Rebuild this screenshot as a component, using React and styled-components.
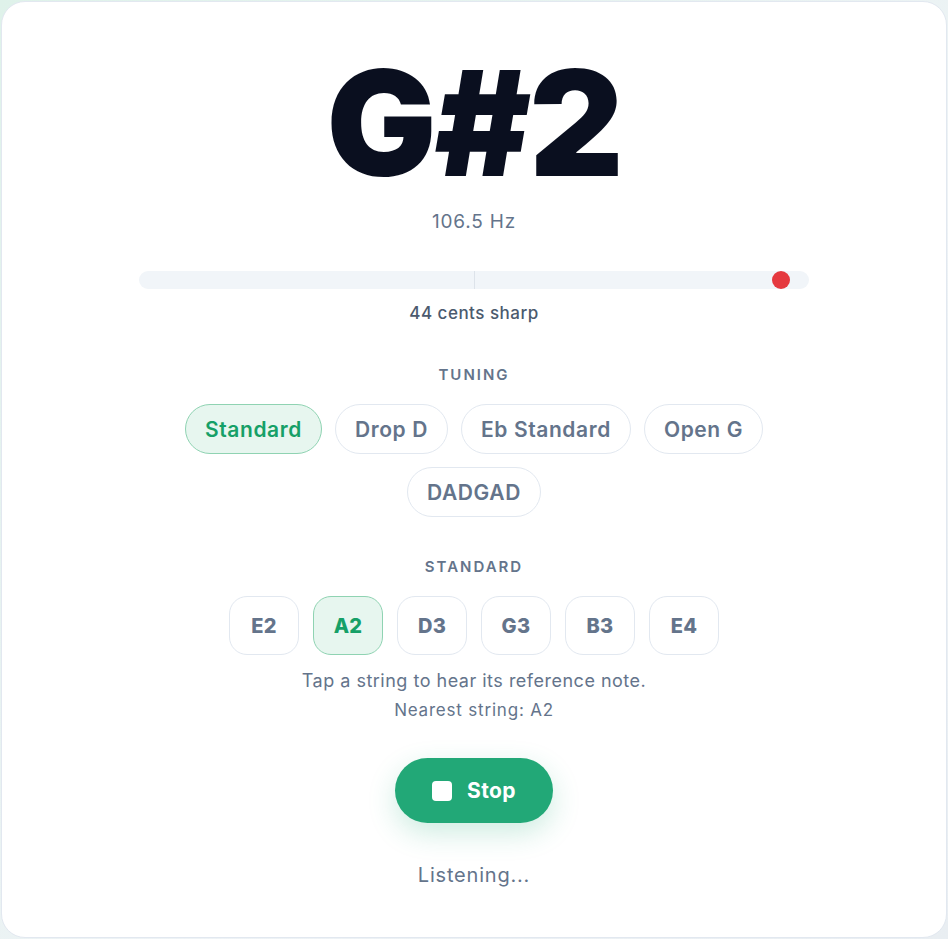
import React from 'react';
import styled, { createGlobalStyle } from 'styled-components';

const GlobalStyle = createGlobalStyle`
  * { box-sizing: border-box; }
  html, body { margin: 0; padding: 0; }
  body {
    font-family: Inter, 'Noto Sans', sans-serif;
    background: linear-gradient(135deg, #dff2ea 0%, #eef3f6 60%, #e9eef2 100%);
    min-height: 939px;
  }
  #root { padding: 1px; }
`;

const tunings = ['Standard', 'Drop D', 'Eb Standard', 'Open G', 'DADGAD'];
const strings = ['E2', 'A2', 'D3', 'G3', 'B3', 'E4'];

const App = () => {
  const cents = 44;
  // meter spans ±48 cents across the track
  const dotLeft = Math.min(98, 50 + (cents / 48) * 50);
  return (
    <>
      <GlobalStyle />
      <Card>
        <Note>G#2</Note>
        <Freq>106.5 Hz</Freq>
        <Meter>
          <CenterLine />
          <Dot style={{ left: `${dotLeft}%` }} />
        </Meter>
        <Cents>44 cents sharp</Cents>

        <Label>Tuning</Label>
        <ChipRow>
          {tunings.map((t, i) => (
            <Chip key={t} $active={i === 0}>
              {t}
            </Chip>
          ))}
        </ChipRow>

        <Label $top={40}>Standard</Label>
        <StringRow>
          {strings.map((s) => (
            <StringBtn key={s} $active={s === 'A2'}>
              {s}
            </StringBtn>
          ))}
        </StringRow>
        <Hint>Tap a string to hear its reference note.</Hint>
        <Nearest>Nearest string: A2</Nearest>

        <StopButton type='button'>
          <StopIcon />
          Stop
        </StopButton>
        <Status>Listening...</Status>
      </Card>
    </>
  );
};

const Card = styled.main`
  height: 937px;
  background: #fff;
  border: 1px solid #e2e8f0;
  border-radius: 24px;
  display: flex;
  flex-direction: column;
  align-items: center;
  padding: 46px 137px 0;
`;

const Note = styled.h1`
  margin: 0;
  font-size: 146px;
  font-weight: 900;
  line-height: 150px;
  letter-spacing: -2px;
  color: #0a0f1f;
`;

const Freq = styled.div`
  margin-top: 12px;
  font-size: 19px;
  letter-spacing: 0.8px;
  color: #64748b;
`;

const Meter = styled.div`
  position: relative;
  width: 100%;
  height: 18px;
  margin-top: 38px;
  background: #f1f5f9;
  border-radius: 999px;
`;

const CenterLine = styled.span`
  position: absolute;
  left: 50%;
  top: 0;
  bottom: 0;
  width: 1px;
  background: #dde3ea;
`;

const Dot = styled.span`
  position: absolute;
  top: 50%;
  width: 18px;
  height: 18px;
  border-radius: 50%;
  background: #e5393f;
  transform: translate(-50%, -50%);
`;

const Cents = styled.div`
  margin-top: 14px;
  font-size: 17px;
  font-weight: 500;
  letter-spacing: 0.5px;
  color: #4b5a6e;
`;

const Label = styled.div`
  margin-top: ${(p) => p.$top || 42}px;
  font-size: 15px;
  font-weight: 600;
  letter-spacing: 2px;
  text-transform: uppercase;
  color: #64748b;
`;

const ChipRow = styled.div`
  display: flex;
  flex-wrap: wrap;
  justify-content: center;
  gap: 13px;
  margin-top: 20px;
`;

const Chip = styled.button`
  height: 50px;
  padding: 0 19px;
  border-radius: 999px;
  font-family: inherit;
  font-size: 21px;
  font-weight: 600;
  letter-spacing: 0.6px;
  border: 1px solid ${(p) => (p.$active ? '#8fd3b2' : '#e2e8f0')};
  background: ${(p) => (p.$active ? '#e7f6ef' : '#fff')};
  color: ${(p) => (p.$active ? '#16a067' : '#64748b')};
  cursor: pointer;
`;

const StringRow = styled.div`
  display: flex;
  gap: 14px;
  margin-top: 20px;
`;

const StringBtn = styled.button`
  width: 70px;
  height: 59px;
  border-radius: 18px;
  font-family: inherit;
  font-size: 20px;
  font-weight: 800;
  letter-spacing: 0.3px;
  border: 1px solid ${(p) => (p.$active ? '#8fd3b2' : '#e2e8f0')};
  background: ${(p) => (p.$active ? '#e7f6ef' : '#fff')};
  color: ${(p) => (p.$active ? '#16a067' : '#64748b')};
  cursor: pointer;
`;

const Hint = styled.div`
  margin-top: 15px;
  font-size: 18px;
  letter-spacing: 0.5px;
  color: #64748b;
`;

const Nearest = styled.div`
  margin-top: 9px;
  font-size: 17px;
  letter-spacing: 0.8px;
  color: #64748b;
`;

const StopButton = styled.button`
  margin-top: 38px;
  width: 158px;
  height: 65px;
  border: none;
  border-radius: 999px;
  background: #22a877;
  color: #fff;
  font-family: inherit;
  font-size: 21px;
  font-weight: 700;
  letter-spacing: 0.4px;
  display: flex;
  align-items: center;
  justify-content: center;
  gap: 15px;
  box-shadow: 0 10px 28px rgba(34, 168, 119, 0.22);
  cursor: pointer;
`;

const StopIcon = styled.span`
  width: 20px;
  height: 20px;
  border-radius: 4px;
  background: #fff;
`;

const Status = styled.div`
  margin-top: 40px;
  font-size: 20px;
  letter-spacing: 0.8px;
  color: #64748b;
`;

export default App;
